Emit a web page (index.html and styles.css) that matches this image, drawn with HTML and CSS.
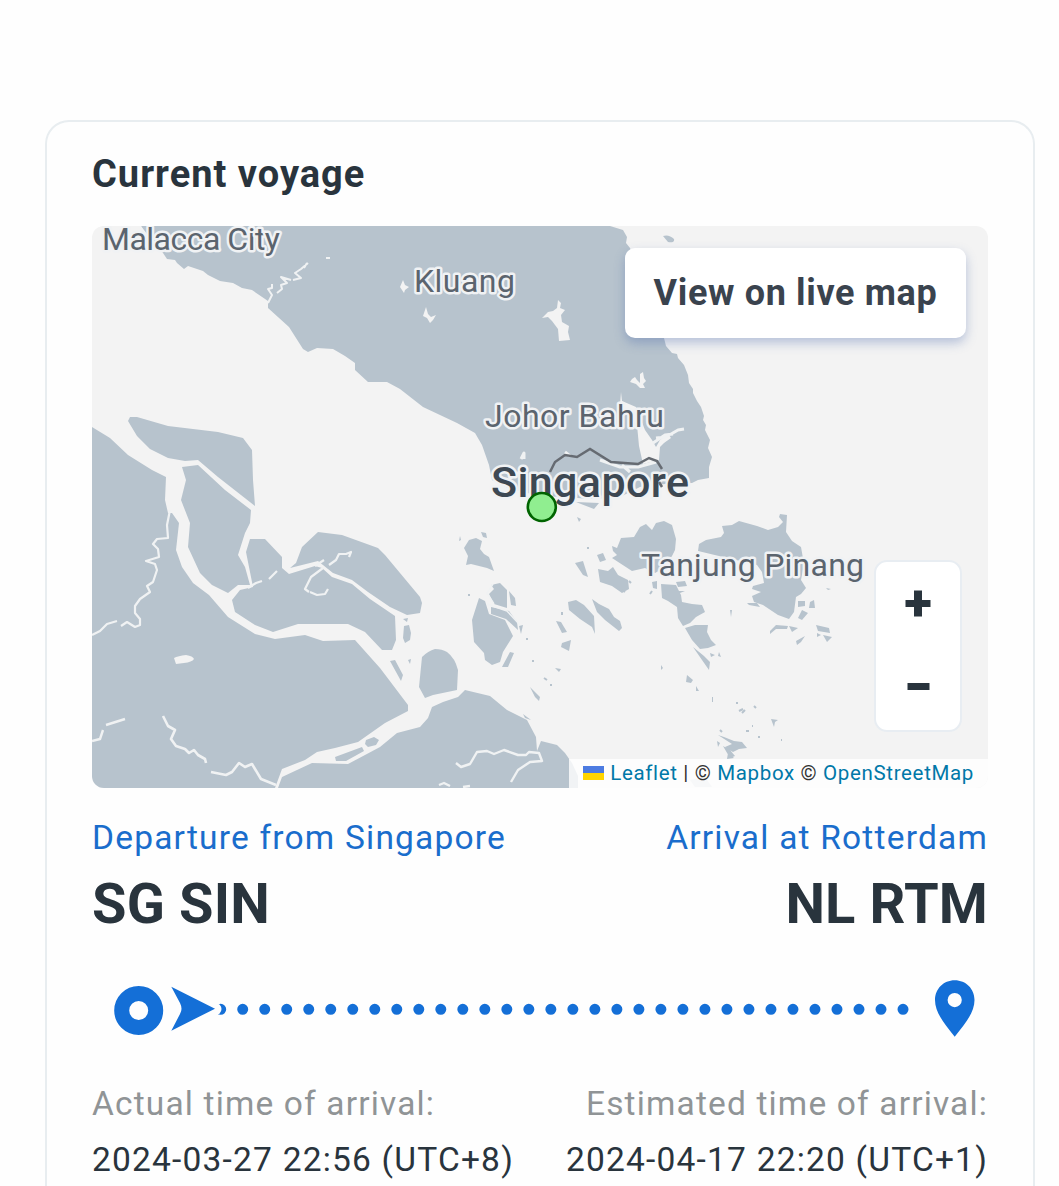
FILE: index.html
```html
<!DOCTYPE html>
<html>
<head>
  <meta charset="utf-8">
  <meta name="viewport" content="width=device-width">
  <title>Current voyage</title>
  <link rel="stylesheet" href="styles.css">
</head>
<body>

    <div class="card">
        <h2 class="card_title">Current voyage</h2>

        <div class="map">
            <svg class="map_tiles" viewBox="92 226 896 562" width="896" height="562">
                <!-- mainland -->
                <g class="land">
                    <path d="M141 226L147 234 163 253 167 259 175 260 177 263 184 269 188 266 203 271 208 275 220 281 233 283 242 288 252 290 268 301 268 308 289 327 303 349 308 352 317 348 333 349 345 356 355 363 355 370 368 382 387 382 400 389 423 407 440 415 457 423 475 433 482 445 489 465 492 480 510 489 540 496 565 497 590 499 620 497 640 487 665 484 692 483 698 480 709 478 709 467 712 457 708 448 710 440 705 430 706 425 703 420 704 416 701 407 697 401 693 393 693 389 689 383 688 375 684 365 678 358 677 354 672 353 666 346 664 338 650 300 630 248 626 243 627 237 623 230 610 226Z"/>
                    <path d="M92 427L110 438 128 455 152 470 166 477 165 500 168 513 172 513 179 523 176 550 182 567 193 583 209 595 228 617 255 634 275 639 305 635 323 641 355 640 380 668 408 705 408 711 385 723 358 742 335 748 317 752 305 760 282 769 275 788H92Z"/>
                    <path d="M278 788L282 777 312 763 348 764 365 755 380 747 397 733 420 727 428 718 432 707 443 702 458 697 465 690 490 696 507 710 527 720 536 737 537 751 541 741 557 745 565 753 572 763 578 776 578 788Z"/>
                    <path d="M128 421L130 417 137 417 168 426 218 432 243 438 252 450 253 480 255 506 218 477 198 460 185 461 168 458 150 449 137 436Z"/>
                    <path d="M182 467L198 465 225 490 251 510 250 523 245 533 238 555 245 567 250 585 238 585 228 593 212 585 200 573 188 547 190 523 181 500 186 480Z"/>
                    <path d="M250 539H265L282 557 282 568 289 574 315 566 322 568 332 577 352 584 370 599 395 616 396 640 392 650 382 650 365 632 348 624H298L273 632 255 625 235 612 232 600 240 590 253 587 246 552Z"/>
                    <path d="M296 563L302 547 318 532 342 535 378 548 385 555 420 597 422 603 420 613 407 615 390 607 368 592 352 580 333 573 318 561 290 568Z"/>
                    <path d="M422 657Q428 651 435 649Q442 649 447 652Q455 658 458 670L457 690 433 695 425 698 419 687Z"/>
                    <path d="M390 661L395 660 403 675 401 681Z M404 626L409 625 411 633 410 640 405 643 403 638Z M403 619L408 618 407 622Z M408 660L411 659 410 664Z"/>
                    <path d="M366 740L374 737 379 740 376 745 368 747 365 744Z M335 757L362 747 364 751 346 761 336 761Z"/>
                </g>
                <!-- islands -->
                <g class="land">
                    <path d="M479 598L485 601 489 614 505 620 513 636 503 652 500 662 492 665 485 660 484 653 474 642 472 620Z"/>
                    <path d="M489 594L494 589 491 585 500 583 507 590 507 608 494 604Z M491 607L509 611 517 622 518 630 506 619 491 614Z M509 591L515 598 516 606 511 605Z M519 626L523 625 521 634Z M503 665L510 652 514 653 508 667 502 667Z"/>
                    <path d="M464 548L469 540 476 538 482 541 480 549 484 554 489 557 494 571 487 568 471 564 466 565 468 556Z M481 532L486 533 487 538 483 537Z M460 536L461 540 459 541Z"/>
                    <path d="M568 602L576 600 584 605 594 616 595 634 592 627 580 619 569 610Z M592 599L599 604 609 609 614 617 620 621 622 628 619 631 605 620 597 612Z M556 621L561 622 567 632 562 633Z M562 643L571 640 569 651 561 647Z M555 668L561 669 559 672Z M530 687L540 697 539 701 535 697Z M523 714L531 720 525 718Z M552 617L555 621M553 640L556 643"/>
                    <path d="M575 563L583 561 588 577 583 575Z M597 555L603 553 606 560 600 562Z M598 569L608 571 613 567 618 575 628 580 629 589 622 593 612 586 600 582Z M612 558L617 555 613 551 612 546 617 548 621 538 634 537 640 527 646 524 652 530 656 523 664 521 672 525 676 539 675 550 672 556 668 562 664 568 655 573 645 568 632 571Z"/>
                    <path d="M652 582L657 581 657 589 653 588Z M661 584L676 585 681 595 682 602 692 604 702 605 705 612 696 617 690 623 683 626 678 618 677 607 668 601 662 598Z M676 582L685 581 687 586 678 587Z M678 591L685 591 680 593Z M685 628L695 625 708 625 707 632 711 640 716 645 708 648 700 649 692 640Z"/>
                    <path d="M693 647L704 656 710 662 709 670 702 660Z M710 653L715 655 711 657Z M719 652L721 657 718 656Z"/>
                    <path d="M698 551L699 544 706 540 721 537 724 533 722 526 732 525 739 521 757 526 768 530 778 527 783 522 779 517 780 514 787 515 786 532 792 541 801 547 804 564 801 580 806 588 801 594 796 597 794 612 789 619 778 615 763 605 754 602 752 596 761 592 752 589 753 586 764 583 762 572 757 565 740 561Z"/>
                    <path d="M747 603L757 603 760 607 749 605Z M798 601L805 601 805 606 798 607Z M810 602L814 600 815 608 809 608Z M802 610L808 613 802 620 798 618Z M770 631L776 625 788 626 787 629 776 629 770 634Z M789 626L798 628 792 632Z M796 641L805 636 801 642 797 645Z M816 625L829 628 830 633 818 631Z M817 633L821 635 817 637Z M823 635L832 637 827 642Z M826 588L831 589 828 590Z"/>
                    <path d="M687 675L693 680 691 683 686 682Z M696 686L699 691 696 691Z M661 665L663 668 661 670Z M712 697H713V702H712Z M771 719L778 720 775 722 774 727Z M718 735L724 737 734 741 742 742 747 748 739 749 733 752 725 747 732 744Z M723 746L730 750 735 756 730 758Z M717 741L720 743 718 747Z M728 753L734 758 727 759Z"/>
                    <path d="M663 236Q669 234 674 239Q675 243 668 242Z M576 502L599 503 594 509 581 504Z M577 517L581 519 579 522Z M730 610L732 610 731 617Z"/>
                    <path d="M690 780L705 777 712 787H695Z" opacity=".5"/>
                </g>
                <g class="specks">
                    <path d="M544 678l3 2M551 684v2M533 660v2M527 638v2M562 612v3M588 547v2M736 703h2M739 711l4-2M742 713l3-3M754 706l2 2M746 731h3M752 726h1M758 737h2M781 740h1M720 730l2 2M469 594v2M622 590l3 2M650 594l2-3M629 581l2 2"/>
                </g>
                <!-- lakes and rivers -->
                <g class="water">
                    <path d="M558 300L561 303 560 308 565 310 561 315 562 322 569 326 568 332 570 340 559 341 558 329 552 321 548 317 542 318 548 312 553 311 557 308Z"/>
                    <path d="M426 307L428 314 431 317 436 315 433 320 430 323 427 318 423 316Z M403 280L405 285 409 287 405 290 404 293 400 287Z M643 372L644 378 646 381 643 384 645 388 640 388 636 384 630 382 632 379 635 377 637 380 640 383 640 374Z"/>
                    <path d="M174 658Q178 656 186 655Q193 656 194 659Q192 662 184 663L176 664Z M92 226H141L146 236 144 242 100 240Z"/>
                    <path d="M621 392L622 401 636 407 645 430 652 440 656 447 660 440 668 434 671 438 664 443 660 447 659 460 643 464 639 446 637 425 620 405Z"/>
                </g>
                <g class="rivers">
                    <path d="M268 303l4-8-4-6 4-1v-4M277 293l5-4-1-4 6-2-6-6 10 3M293 280l8-2-6-5 6-4 7-6M304 268l3-5M326 258h4" stroke-width="2"/>
                    <path d="M170 510l-3 15 1 13-11 1-4 5 5 5 1 8-13 4 9 3 2 6-4 12-6 4 3 6-10 7-5 7 0 7 5 6 0 6-5 2-8-5-6 4M117 621l-10 3-7 7-8 4" stroke-width="2.2"/>
                    <path d="M248 588l8-5 6-2M269 579l8-8M315 566l9-6M329 565l7-5 3-6 7 0 5-2-2 5M323 568l-12 9-6 12 4 3M310 592l7 3 8-1 3-5" stroke-width="2.2"/>
                    <path d="M163 716l5 10 7 4-4 9 5 7 9 3 4 4 5-3 4 5 7 4 1 4M211 772l15 3 6-3 7-9 6 4 7-3 9 15 15 6" stroke-width="2.6"/>
                    <path d="M92 741l8-2 3-9M106 725l19-6" stroke-width="2.4"/>
                    <path d="M456 763l5 4 9-3 7-12 10-1 7 3 10-4 14 5 8 0 3-3 10 1 3 8-12 1-12 8-7 12M439 785l5-2 6 3M463 787l7-1" stroke-width="2.4"/>
                    <path d="M653 443l12-8 8-1M656 438l10-1 12-7 6-1M509 479l15-10M524 459v-6l-3 6M497 485l10 5M565 452l5 4M600 460l20 7 18 0 18-5M622 465l8 7" stroke-width="3"/>
                    <path d="M487 604l20 7 13 14M493 584l-6 9 7 11" stroke-width="1.5"/>
                </g>
                <path class="frontier" d="M550 472L555 462 565 455 577 457 590 449 611 462 638 464 649 458 657 461 662 469"/>

                <text class="place" x="102" y="250" textLength="178">Malacca City</text>
                <text class="place" x="414" y="292" textLength="101">Kluang</text>
                <text class="place" x="485" y="427" textLength="179">Johor Bahru</text>
                <text class="place" x="641" y="576" textLength="223">Tanjung Pinang</text>
                <text class="place city" x="491" y="497" textLength="198">Singapore</text>
                <path class="frontier" d="M659 482l3 5"/>
                <circle class="ship" cx="541.8" cy="507" r="14"/>
            </svg>

            <div class="live_btn">View on live map</div>
            <div class="zoom">
                <svg width="84" height="168" viewBox="0 0 84 168">
                    <path d="M38 28.500h8v9.500h8.500v7h-8.500v9.500h-8v-9.500H29.500v-7h8.500z"/>
                    <path d="M31.500 121h22v7h-22z"/>
                </svg>
            </div>
            <div class="attribution">
                <svg width="21" height="14" viewBox="0 0 21 14">
                    <rect width="21" height="7" fill="#4c7be1"/>
                    <rect y="7" width="21" height="7" fill="#ffd500"/>
                </svg>
                <p><a>Leaflet</a> | © <a>Mapbox</a> © <a>OpenStreetMap</a></p>
            </div>
        </div>

        <div class="row port_name">
            <span>Departure from Singapore</span>
            <span>Arrival at Rotterdam</span>
        </div>
        <div class="row port_code">
            <span>SG SIN</span>
            <span>NL RTM</span>
        </div>

        <svg class="track" viewBox="92 970 896 80" width="896" height="80">
            <path class="dots" d="M220.700 1009.300H904"/>
            <circle class="gap" cx="215.500" cy="1009" r="6"/>
            <path class="fill" d="M171.300 986.700L215 1008.700 171.300 1030.700 180 1014Q183 1009 180 1003Z"/>
            <circle class="ring" cx="138.700" cy="1010.500" r="17"/>
            <path class="fill" fill-rule="evenodd" d="M954.700 980.300C943.500 980.300 935 989 935 1000C935 1012 943 1022 954.700 1036.700C966.500 1022 974.500 1012 974.500 1000C974.500 989 966 980.300 954.700 980.300ZM954.700 993a7.100 7.100 0 1 1 0 14.200a7.100 7.100 0 1 1 0-14.200Z"/>
        </svg>

        <div class="row time_label">
            <span>Actual time of arrival:</span>
            <span>Estimated time of arrival:</span>
        </div>
        <div class="row time_value">
            <span>2024-03-27 22:56 (UTC+8)</span>
            <span>2024-04-17 22:20 (UTC+1)</span>
        </div>
    </div>

</body>
</html>
```
FILE: styles.css
```css
body{
    margin: 0;
    padding-top: 120px;
    background-color: #fefefe;
    color: #29343d;
    font-family: Roboto, sans-serif;
}

.card{
    width: 990px;
    height: 1066px;
    margin-left: 45px;
    padding: 0 45px;
    box-sizing: border-box;
    border: 2px solid #e8edf0;
    border-bottom: none;
    border-radius: 24px 24px 0 0;
}

.card_title{
    margin: 0;
    height: 104px;
    line-height: 104px;
    font-size: 38px;
    font-weight: 700;
    letter-spacing: 1px;
}

.map{
    position: relative;
    height: 562px;
    border-radius: 12px;
    overflow: hidden;
    background-color: #f3f3f3;
}

.map_tiles{
    display: block;
}

.land{
    fill: #b7c3cd;
}

.water{
    fill: #f3f3f3;
}

.rivers{
    fill: none;
    stroke: #f0f2f3;
    stroke-linejoin: round;
}

.specks{
    fill: none;
    stroke: #b7c3cd;
    stroke-width: 2;
}

.frontier{
    fill: none;
    stroke: #666b72;
    stroke-width: 2.5;
}

.place{
    font-size: 32px;
    fill: #5b646e;
    stroke: #f0f2f4;
    stroke-width: 5px;
    stroke-linejoin: round;
    paint-order: stroke;
}

.place.city{
    font-size: 43px;
    font-weight: 500;
    fill: #3d4853;
}

.ship{
    fill: #90ee90;
    stroke: #006400;
    stroke-width: 2.6;
}

.live_btn{
    position: absolute;
    top: 22px;
    right: 22px;
    width: 341px;
    height: 90px;
    line-height: 90px;
    border-radius: 10px;
    background-color: #fff;
    box-shadow: 0 5px 11px rgba(70, 100, 170, 0.35);
    color: #3a434e;
    text-align: center;
    font-size: 36px;
    font-weight: 700;
    letter-spacing: 0.65px;
}

.zoom{
    position: absolute;
    right: 26px;
    bottom: 56px;
    border: 2px solid #e8edf2;
    border-radius: 13px;
    background-color: #fff;
}

.zoom svg{
    display: block;
    fill: #29343d;
}

.attribution{
    position: absolute;
    right: 0;
    bottom: 0;
    width: 419px;
    height: 29px;
    padding: 0 14px 2px;
    box-sizing: border-box;
    display: flex;
    align-items: center;
    justify-content: space-between;
    background-color: rgba(255, 255, 255, 0.8);
    color: #333;
    font-size: 20.5px;
    letter-spacing: 0.65px;
}

.attribution p{
    margin: 0;
    white-space: nowrap;
}

.attribution a{
    color: #0078a8;
}

.row{
    display: flex;
    justify-content: space-between;
    white-space: nowrap;
}

.port_name{
    height: 66px;
    margin-top: 17px;
    line-height: 66px;
    color: #1a6dcc;
    font-size: 33.5px;
    letter-spacing: 1.2px;
}

.port_code{
    height: 66px;
    line-height: 66px;
    font-size: 56px;
    font-weight: 700;
    letter-spacing: 0.15px;
}

.track{
    display: block;
    margin-top: 33px;
}

.track .fill{
    fill: #146fd7;
}

.track .gap{
    fill: #fefefe;
}

.track .dots{
    stroke: #146fd7;
    stroke-width: 11;
    stroke-linecap: round;
    stroke-dasharray: 0 22.01;
}

.track .ring{
    fill: none;
    stroke: #146fd7;
    stroke-width: 15;
}

.time_label{
    height: 56px;
    margin-top: 26px;
    line-height: 56px;
    color: #909496;
    font-size: 33.5px;
    letter-spacing: 1.15px;
}

.time_value{
    height: 54px;
    line-height: 56px;
    font-size: 33.5px;
    letter-spacing: 1.2px;
}
```
